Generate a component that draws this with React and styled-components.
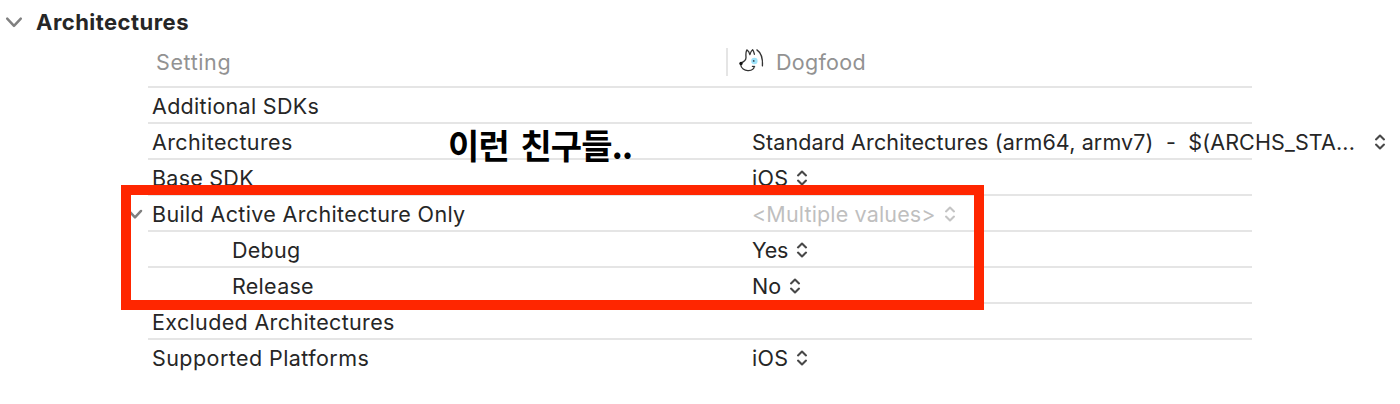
import React from "react";
import styled, { createGlobalStyle } from "styled-components";

const GlobalStyle = createGlobalStyle`
  * { box-sizing: border-box; }
  body {
    margin: 0;
    background: #fff;
    color: #262626;
    font-family: Inter, "Liberation Sans", sans-serif;
    font-size: 21.5px;
    line-height: 34px;
    overflow: hidden;
  }
`;

const Panel = styled.main`
  position: relative;
  width: 1400px;
  height: 404px;
`;

const SectionHeader = styled.header`
  display: flex;
  align-items: center;
  height: 44px;
  padding-left: 5px;
`;

const SectionTitle = styled.h2`
  margin: 0 0 0 13px;
  font-size: 22px;
  font-weight: 700;
  line-height: 44px;
  letter-spacing: 0.46px;
`;

const Table = styled.section`
  width: 1104px;
  margin-left: 148px;
`;

const HeadRow = styled.div`
  display: flex;
  height: 44px;
  border-bottom: 2px solid #e5e5e5;
  color: #929292;
`;

const HeadSetting = styled.div`
  width: 578px;
  padding: 1px 0 0 8px;
`;

const HeadTarget = styled.div`
  display: flex;
  align-items: center;
  align-self: flex-start;
  gap: 12px;
  height: 28px;
  margin-top: 4px;
  padding-left: 10px;
  border-left: 2px solid #e5e5e5;
`;

const Row = styled.div`
  display: flex;
  height: 36px;
  padding-top: 2px;
  border-bottom: 2px solid ${(p) => (p.$last ? "transparent" : "#e5e5e5")};
`;

const NameCell = styled.div`
  display: flex;
  align-items: center;
  flex: none;
  width: 604px;
  padding-left: ${(p) => (p.$nested ? 84 : 4)}px;
`;

const Disclosure = styled.span`
  display: flex;
  width: 20px;
  margin-left: -25px;
  margin-right: 5px;
`;

const ValueCell = styled.div`
  display: flex;
  align-items: center;
  flex: none;
  gap: ${(p) => p.$gap || 8}px;
  color: ${(p) => (p.$muted ? "#bfbfbf" : "inherit")};
`;

const Label = styled.span`
  white-space: pre;
  letter-spacing: ${(p) => p.$tracking || 0}px;
`;

const Highlight = styled.div`
  position: absolute;
  left: 121px;
  top: 185px;
  width: 863px;
  height: 125px;
  border: 10px solid #ff2600;
`;

const Note = styled.div`
  position: absolute;
  left: 448px;
  top: 121px;
  color: #000;
  font-family: "Noto Sans CJK KR", sans-serif;
  font-size: 34px;
  font-weight: 700;
  line-height: 48px;
  letter-spacing: -0.8px;
  word-spacing: 4.5px;
  white-space: nowrap;
`;

const Chevron = ({ size = 18, stroke = 2.5 }) => (
  <svg width={size} height={size} viewBox="0 0 18 18" fill="none" stroke="#808080" strokeWidth={stroke} strokeLinecap="round" strokeLinejoin="round">
    <path d="M2.2 5.6 9 12.8l6.8-7.2" />
  </svg>
);

const Stepper = ({ muted }) => (
  <svg width="12" height="18" viewBox="0 0 12 18" fill="none" stroke={muted ? "#c4c4c4" : "#484848"} strokeWidth="2.1" strokeLinecap="round" strokeLinejoin="round">
    <path d="M2 6.4 6 2.6l4 3.8M2 11.6l4 3.8 4-3.8" />
  </svg>
);

const DogIcon = () => (
  <svg width="26" height="26" viewBox="0 0 26 26" overflow="visible" fill="none" stroke="#333" strokeWidth="1.3" strokeLinecap="round" strokeLinejoin="round">
    <circle cx="16.4" cy="12" r="3.2" fill="#9fe4fb" stroke="none" />
    <path d="M3 13.8C5.5 13 8 11.500 8 8.500 7.800 6 7.600 3 8.900.8c1.600.8 2.500 2.800 3 4.900.4-1.900 1.300-4 2.700-5 1.100 1.300 1.300 2.900 1.800 4.600" />
    <path d="M18.900.9c3.600 2.400 6 8.600 5.500 16" />
    <path d="M2.600 15.300c.3 4 3.900 6.600 7.900 6.300 3.100-.2 5.500-1.700 5.700-4.100m-1.800-.2 2.200.3" />
    <circle cx="3" cy="14.500" r="1.700" fill="#111" stroke="none" />
    <circle cx="15.700" cy="11.900" r=".9" fill="#345" stroke="none" />
  </svg>
);

const settings = [
  { name: "Additional SDKs", tracking: 0.3 },
  {
    name: "Architectures",
    tracking: 0.38,
    value: "Standard Architectures (arm64, armv7)  -  $(ARCHS_STA...",
    valueTracking: 0.13,
    gap: 19,
  },
  { name: "Base SDK", tracking: 0.25, value: "iOS", valueTracking: 0.3 },
  {
    name: "Build Active Architecture Only",
    tracking: 0.35,
    value: "<Multiple values>",
    valueTracking: 0.15,
    muted: true,
    open: true,
  },
  { name: "Debug", tracking: 0.25, value: "Yes", valueTracking: -0.3, nested: true },
  { name: "Release", tracking: 0.28, value: "No", nested: true },
  { name: "Excluded Architectures", tracking: 0.35 },
  { name: "Supported Platforms", tracking: 0.43, value: "iOS", valueTracking: 0.3 },
];

export default function App() {
  return (
    <>
      <GlobalStyle />
      <Panel>
        <SectionHeader>
          <Chevron />
          <SectionTitle>Architectures</SectionTitle>
        </SectionHeader>
        <Table>
          <HeadRow>
            <HeadSetting>
              <Label $tracking={0.6}>Setting</Label>
            </HeadSetting>
            <HeadTarget>
              <DogIcon />
              <Label $tracking={0.3}>Dogfood</Label>
            </HeadTarget>
          </HeadRow>
          {settings.map((s, i) => (
            <Row key={s.name} $last={i === settings.length - 1}>
              <NameCell $nested={s.nested}>
                {s.open && (
                  <Disclosure>
                    <Chevron size={16} stroke={2.8} />
                  </Disclosure>
                )}
                <Label $tracking={s.tracking}>{s.name}</Label>
              </NameCell>
              {s.value && (
                <ValueCell $muted={s.muted} $gap={s.gap}>
                  <Label $tracking={s.valueTracking}>{s.value}</Label>
                  <Stepper muted={s.muted} />
                </ValueCell>
              )}
            </Row>
          ))}
        </Table>
        <Highlight />
        <Note>이런 친구들..</Note>
      </Panel>
    </>
  );
}
